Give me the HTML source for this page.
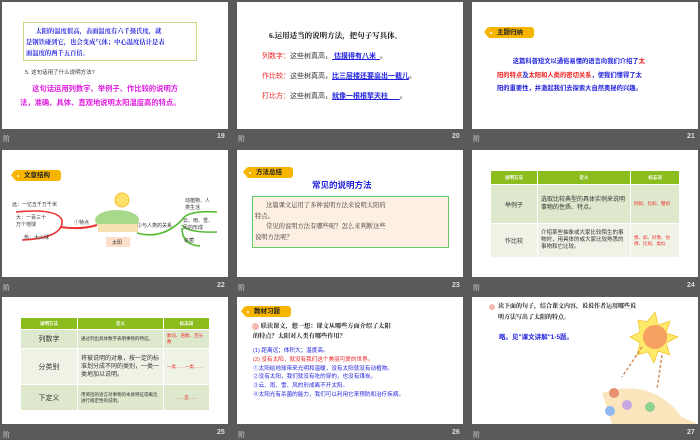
<!DOCTYPE html>
<html><head><meta charset="utf-8"><style>
*{margin:0;padding:0;box-sizing:border-box}
body{width:700px;height:438px;background:#5a5a5a;position:relative;overflow:hidden;font-family:"Liberation Sans","Noto Sans CJK SC",sans-serif}
.s{position:absolute;width:226px;height:127px;background:#fff;overflow:hidden}
.s>*{position:absolute;white-space:nowrap}
.f{position:absolute;color:#ddd;font-size:7px;font-weight:bold}
.tag{background:#f7b500;color:#222;font-size:6.5px;font-weight:bold;height:11px;line-height:11px;padding-left:9px;width:46px;border-radius:2px 3px 3px 2px}
.tag:before{content:"";position:absolute;left:-4px;top:0;border-right:4px solid #f7b500;border-top:5.5px solid transparent;border-bottom:5.5px solid transparent}
.tag:after{content:"";position:absolute;left:2px;top:4.5px;width:2px;height:2px;background:#fff;border-radius:50%}
table{border-collapse:collapse;font-size:6px;color:#333;table-layout:fixed}
td{text-align:center;vertical-align:middle;border:1px solid #fff;padding:0 3px;white-space:normal}
td.l{text-align:left;line-height:8px}
td.r{color:#e33;text-align:left;font-size:4.5px;line-height:6px}
th{background:#8cbd1e;color:#fff;font-size:4.5px;border:1px solid #fff}
</style></head><body>

<!-- 19 -->
<div class="s" style="left:2px;top:2px">
 <div style="left:21px;top:20px;width:174px;height:39px;border:1px solid #c9d985"></div>
 <div style="left:24px;top:24px;font-size:6.3px;line-height:11px;color:#2222dd;font-weight:bold;font-family:'Liberation Serif','Noto Serif CJK SC',serif">&nbsp;&nbsp;&nbsp;&nbsp;&nbsp;&nbsp;太阳的温度很高，表面温度有六千摄氏度，就<br>是钢铁碰到它，也会变成气体；中心温度估计是表<br>面温度的两千五百倍。</div>
 <div style="left:23px;top:66px;font-size:5.5px;color:#333">5. 这句话用了什么说明方法?</div>
 <div style="left:18px;top:80px;font-size:7.3px;line-height:14px;color:#e01de0;font-weight:bold">&nbsp;&nbsp;&nbsp;&nbsp;&nbsp;&nbsp;这句话运用列数字、举例子、作比较的说明方<br>法，准确、具体、直观地说明太阳温度高的特点。</div>
</div>
<div class="f" style="left:3px;top:134px;color:#aaa">阶</div><div class="f" style="left:217px;top:133px">19</div>

<!-- 20 -->
<div class="s" style="left:237px;top:2px">
 <div style="left:32px;top:28px;font-size:7.5px;font-weight:bold;color:#111;font-family:'Liberation Serif','Noto Serif CJK SC',serif">6.运用适当的说明方法，把句子写具体。</div>
 <div style="left:25px;top:49px;font-size:7px;color:#333"><span style="color:#e22">列数字：</span>这些树真高，<span style="color:#22d;text-decoration:underline;font-weight:bold">&nbsp;估摸得有八米&nbsp;&nbsp;</span>。</div>
 <div style="left:25px;top:69px;font-size:7px;color:#333"><span style="color:#e22">作比较：</span>这些树真高，<span style="color:#22d;text-decoration:underline;font-weight:bold">比三层楼还要高出一截儿</span>。</div>
 <div style="left:25px;top:89px;font-size:7px;color:#333"><span style="color:#e22">打比方：</span>这些树真高，<span style="color:#22d;text-decoration:underline;font-weight:bold">就像一根根擎天柱&nbsp;&nbsp;&nbsp;&nbsp;&nbsp;&nbsp;</span>。</div>
</div>
<div class="f" style="left:238px;top:134px;color:#aaa">阶</div><div class="f" style="left:452px;top:133px">20</div>

<!-- 21 -->
<div class="s" style="left:472px;top:2px">
 <div class="tag" style="left:16px;top:25px">主题归纳</div>
 <div style="left:25px;top:53px;font-size:6.3px;line-height:13.5px;font-weight:bold;color:#22d">&nbsp;&nbsp;&nbsp;&nbsp;&nbsp;&nbsp;&nbsp;&nbsp;&nbsp;这篇科普短文以通俗易懂的语言向我们介绍了<span style="color:#e22">太</span><br><span style="color:#e22">阳的特点</span>及<span style="color:#e22">太阳和人类的密切关系</span>，使我们懂得了太<br>阳的重要性，并激起我们去探索大自然奥秘的兴趣。</div>
</div>
<div class="f" style="left:473px;top:134px;color:#aaa">阶</div><div class="f" style="left:687px;top:133px">21</div>

<!-- 22 -->
<div class="s" style="left:2px;top:150px">
 <div class="tag" style="left:13px;top:20px">文章结构</div>
 <svg style="left:0;top:0" width="226" height="127">
  <path d="M14 62 Q55 58 60 70 Q62 88 20 90" stroke="#e33" stroke-width="1.6" fill="none"/>
  <path d="M58 77 Q80 80 95 75" stroke="#e33" stroke-width="2" fill="none"/>
  <path d="M135 83 Q160 90 180 70 Q185 60 215 62" stroke="#5b3" stroke-width="1.6" fill="none"/>
  <path d="M180 75 Q185 83 215 82" stroke="#5b3" stroke-width="1.6" fill="none"/>
  <path d="M180 78 Q180 95 198 96" stroke="#5b3" stroke-width="1.6" fill="none"/>
  <circle cx="120" cy="50" r="7" fill="#fde06a" stroke="#f5c030"/>
  <ellipse cx="115" cy="70" rx="22" ry="10" fill="#a7d98a"/>
  <rect x="96" y="74" width="40" height="8" fill="#f5e0b0"/>
  <rect x="104" y="87" width="24" height="10" fill="#fde0cc"/>
 </svg>
 <div style="left:10px;top:51px;font-size:5px;color:#333">远：一亿五千万千米</div>
 <div style="left:14px;top:65px;font-size:5px;line-height:7px;color:#333">大：一百三十<br>万个地球</div>
 <div style="left:22px;top:84px;font-size:5px;color:#333">热：大火球</div>
 <div style="left:72px;top:69px;font-size:5px;color:#333">①特点</div>
 <div style="left:110px;top:89px;font-size:5px;color:#333">太阳</div>
 <div style="left:135px;top:72px;font-size:5px;color:#333">②与人类的关系</div>
 <div style="left:183px;top:48px;font-size:5px;line-height:7px;color:#333">动植物、人<br>类生活</div>
 <div style="left:181px;top:68px;font-size:5px;line-height:7px;color:#333">云、雨、雪、<br>风的形成</div>
 <div style="left:182px;top:87px;font-size:5px;color:#333">杀菌</div>
</div>
<div class="f" style="left:3px;top:283px;color:#aaa">阶</div><div class="f" style="left:217px;top:282px">22</div>

<!-- 23 -->
<div class="s" style="left:237px;top:150px">
 <div class="tag" style="left:10px;top:17px">方法总结</div>
 <div style="left:75px;top:29px;font-size:8.5px;font-weight:bold;color:#22d">常见的说明方法</div>
 <div style="left:15px;top:46px;width:197px;height:52px;background:#fdf0e2;border:1px solid #6c6"></div>
 <div style="left:18px;top:51px;font-size:6.3px;line-height:10.5px;color:#333;font-family:'Liberation Serif','Noto Serif CJK SC',serif">&nbsp;&nbsp;&nbsp;&nbsp;&nbsp;&nbsp;&nbsp;这篇课文运用了多种说明方法来说明太阳的<br>特点。<br>&nbsp;&nbsp;&nbsp;&nbsp;&nbsp;&nbsp;&nbsp;常见的说明方法有哪些呢？怎么来判断这些<br>说明方法呢？</div>
</div>
<div class="f" style="left:238px;top:283px;color:#aaa">阶</div><div class="f" style="left:452px;top:282px">23</div>

<!-- 24 -->
<div class="s" style="left:472px;top:150px">
 <table style="left:18px;top:20px;width:190px">
  <tr style="height:14px"><th style="width:47px">说明方法</th><th style="width:93px">定义</th><th>标志词</th></tr>
  <tr style="height:39px;background:#dde8cc"><td>举例子</td><td class="l">选取比较典型的具体实例来说明事物的性质、特点。</td><td class="r">例如、比如、譬如</td></tr>
  <tr style="height:34px;background:#eef3e6"><td>作比较</td><td class="l" style="font-size:5.5px;line-height:7px">介绍某些抽象或大家比较陌生的事物时，用具体的或大家比较熟悉的事物和它比较。</td><td class="r">像、如、好像、仿佛、比如、类似</td></tr>
 </table>
</div>
<div class="f" style="left:473px;top:283px;color:#aaa">阶</div><div class="f" style="left:687px;top:282px">24</div>

<!-- 25 -->
<div class="s" style="left:2px;top:297px">
 <table style="left:18px;top:20px;width:190px">
  <tr style="height:12px"><th style="width:57px">说明方法</th><th style="width:86px">定义</th><th>标志词</th></tr>
  <tr style="height:19px;background:#dde8cc"><td style="font-size:7px">列数字</td><td class="l" style="font-size:4.5px;line-height:6px">通过列出具体数字表明事物的特征。</td><td class="r">数词、倍数、百分数</td></tr>
  <tr style="height:36px;background:#eef3e6"><td style="font-size:7px">分类别</td><td class="l">将被说明的对象，按一定的标准划分成不同的类别，一类一类地加以说明。</td><td class="r">一类……一类……</td></tr>
  <tr style="height:26px;background:#dde8cc"><td style="font-size:7px">下定义</td><td class="l" style="font-size:4.5px;line-height:6px">用简括的语言对事物的本质特征或概念进行规定性的说明。</td><td class="r" style="text-align:center">……是……</td></tr>
 </table>
</div>
<div class="f" style="left:3px;top:430px;color:#aaa">阶</div><div class="f" style="left:217px;top:429px">25</div>

<!-- 26 -->
<div class="s" style="left:237px;top:297px">
 <div class="tag" style="left:8px;top:9px">教材习题</div>
 <div style="left:15px;top:26px;width:7px;height:7px;border-radius:50%;background:#f3b8b0"></div>
 <div style="left:16px;top:25px;font-size:6.2px;line-height:10px;font-weight:bold;color:#222;font-family:'Liberation Serif','Noto Serif CJK SC',serif">&nbsp;&nbsp;&nbsp;&nbsp;&nbsp;联读课文，想一想：课文从哪些方面介绍了太阳<br>的特点？太阳对人类有哪些作用？</div>
 <div style="left:16px;top:50px;font-size:5.6px;line-height:8.8px;color:#22d">(1) 距离远；体积大；温度高。<br><span style="color:#e22">(2) 没有太阳，就没有我们这个美丽可爱的世界。</span><br>①太阳给地球带来光明和温暖，没有太阳就没有动植物。<br>②没有太阳，我们就没有吃的穿的，也没有煤炭。<br>③云、雨、雪、风的形成离不开太阳。<br>④太阳光有杀菌的能力，我们可以利用它来预防和治疗疾病。</div>
</div>
<div class="f" style="left:238px;top:430px;color:#aaa">阶</div><div class="f" style="left:452px;top:429px">26</div>

<!-- 27 -->
<div class="s" style="left:472px;top:297px">
 <div style="left:17px;top:7px;width:6px;height:6px;border-radius:50%;background:#f3b8b0"></div>
 <div style="left:26px;top:5px;font-size:6px;line-height:11px;font-weight:bold;color:#222;font-family:'Liberation Serif','Noto Serif CJK SC',serif">读下面的句子，结合课文内容，说说作者运用哪些说<br>明方法写出了太阳的特点。</div>
 <div style="left:27px;top:34px;font-size:6.5px;font-weight:bold;color:#22d">略。见"课文讲解"1-5题。</div>
 <svg style="left:0;top:0" width="226" height="127">
  <path d="M130 96 Q180 80 210 120 L226 127 L140 127 Z" fill="#fbe5bd"/>
  <polygon points="175,25 183,15 186,28 198,24 194,36 206,40 194,46 198,58 186,54 182,66 176,55 165,58 168,46 158,40 168,35 166,23" fill="#fde96a" stroke="#f0c020" stroke-width="0.7"/>
  <circle cx="183" cy="40" r="12" fill="#f5a060"/>
  <line x1="170" y1="50" x2="150" y2="80" stroke="#d09060" stroke-width="1.5" stroke-dasharray="3,2"/>
  <line x1="190" y1="58" x2="185" y2="92" stroke="#d09060" stroke-width="1.5" stroke-dasharray="3,2"/>
  <circle cx="142" cy="96" r="5" fill="#e89070"/>
  <circle cx="155" cy="108" r="5" fill="#c8a8e0"/>
  <circle cx="138" cy="114" r="5" fill="#90b8f0"/>
  <circle cx="178" cy="110" r="5" fill="#90d090"/>
 </svg>
</div>
<div class="f" style="left:473px;top:430px;color:#aaa">阶</div><div class="f" style="left:687px;top:429px">27</div>

</body></html>
